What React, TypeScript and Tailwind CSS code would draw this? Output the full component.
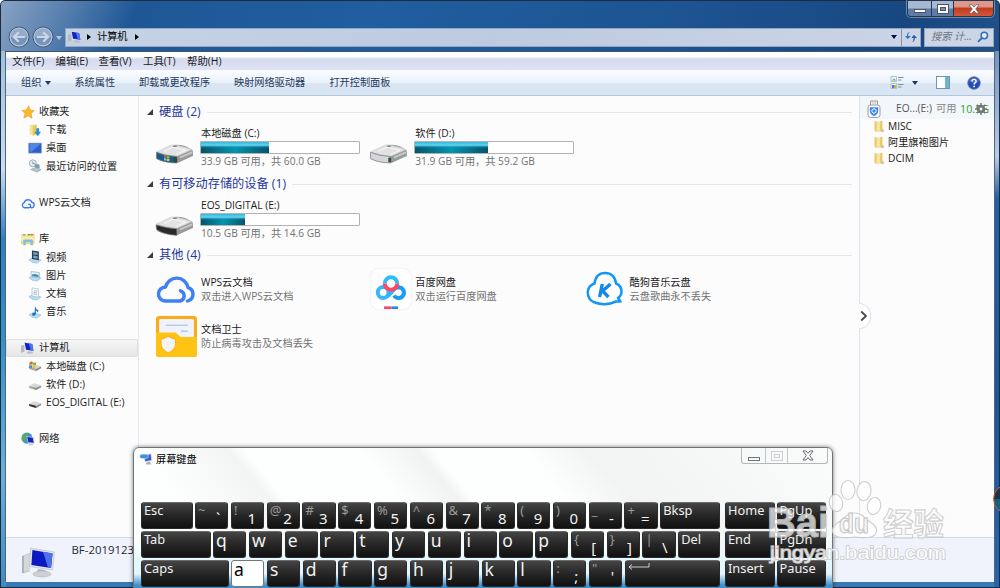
import { type ReactNode } from "react";
import { clsx } from "clsx";

type IconName =
  | "star" | "download" | "desktop" | "recent" | "cloud" | "library" | "video" | "picture"
  | "document" | "music" | "computer" | "driveC" | "driveD" | "driveE" | "network";

type NavItem = { label: string; icon: IconName; child?: boolean; selected?: boolean } | null;

const navItems: NavItem[] = [
  { label: "收藏夹", icon: "star" },
  { label: "下载", icon: "download", child: true },
  { label: "桌面", icon: "desktop", child: true },
  { label: "最近访问的位置", icon: "recent", child: true },
  null,
  { label: "WPS云文档", icon: "cloud" },
  null,
  { label: "库", icon: "library" },
  { label: "视频", icon: "video", child: true },
  { label: "图片", icon: "picture", child: true },
  { label: "文档", icon: "document", child: true },
  { label: "音乐", icon: "music", child: true },
  null,
  { label: "计算机", icon: "computer", selected: true },
  { label: "本地磁盘 (C:)", icon: "driveC", child: true },
  { label: "软件 (D:)", icon: "driveD", child: true },
  { label: "EOS_DIGITAL (E:)", icon: "driveE", child: true },
  null,
  { label: "网络", icon: "network" },
];

function Tray() {
  return <path d="M1 11 L6 8.5 L15 11.5 L10 15 Q4 14.5 1 11Z" fill="#b9dcf2" stroke="#7fb6dc" strokeWidth=".6" />;
}

function SmallDrive({ kind }: { kind: "C" | "D" | "E" }) {
  return (
    <>
      <path d="M1 9 L7 6 L15 8.5 L9 12 Z" fill="#d7d7d7" />
      <path d="M1 9 L9 11.2 V13.8 L1.5 11.4Z" fill={kind === "E" ? "#2c2c2c" : "#a5a5a5"} />
      <path d="M9 11.5 L15 8.5 V10.5 L9 14Z" fill="#8b8b8b" />
      {kind === "C" && (
        <>
          <path d="M2 3.5 Q4 2.4 5.6 3.4 L5 6.6 Q3.4 6 1.4 6.8Z" fill="#e2672b" />
          <path d="M6.2 3.6 Q8 4.4 9.6 3.6 L9 6.8 Q7.4 7.4 5.6 6.8Z" fill="#7db53c" />
          <path d="M1.3 7.4 Q3.4 6.6 4.9 7.4 L4.3 10.4 Q2.8 9.8 .8 10.4Z" fill="#3d8fd0" />
          <path d="M5.5 7.6 Q7.4 8.2 8.9 7.5 L8.3 10.5 Q6.6 11.2 4.9 10.4Z" fill="#eebd2c" />
        </>
      )}
      {kind === "D" && <circle cx="8" cy="12" r=".9" fill="#4aa53c" />}
    </>
  );
}

function ComputerShape() {
  return (
    <>
      <path d="M0 5.5 L4 4.2 V12.4 L0 13.4Z" fill="#b4bac1" />
      <path d="M3.5 1.2 L13.4 2.8 L15 12 L5.2 11Z" fill="#dfe3e8" />
      <path d="M4.2 2 L12.8 3.4 L14.2 11 L5.8 10.1Z" fill="#1320c8" />
      <path d="M9 2.8 L12.8 3.4 L14.2 11 L11 10.6Z" fill="#4f74ea" />
      <path d="M8 11.6 L12 12 L14.5 13.6 Q10 15.4 6 13.8Z" fill="#b9bfc6" />
    </>
  );
}

const shapes: Record<IconName, ReactNode> = {
  star: (
    <path d="M8.6 1 L10.6 5.6 L15 6.4 L11.6 9.8 L12.6 15 L8 12.4 L3.2 15 L4.6 9.8 L1 6.2 L6.2 5.6Z" fill="#fbb829" stroke="#e89b2a" strokeWidth=".7" />
  ),
  download: (
    <>
      <path d="M2 2 H7 V14 L2 13Z" fill="#f5e39b" />
      <path d="M5.4 3 L10 1.4 V13 L5.4 14.8Z" fill="#e8c75c" />
      <path d="M9.5 6 H12.7 V10 H15 L11.2 15 L7.2 10 H9.5Z" fill="#2c8fd0" />
    </>
  ),
  desktop: (
    <>
      <rect x=".8" y="2.4" width="14.6" height="11.4" fill="#2d5fc8" stroke="#8aa3cc" strokeWidth=".8" />
      <path d="M1.8 3.4 H14.4 L4 12.4 H1.8Z" fill="#5186e4" />
    </>
  ),
  recent: (
    <>
      <circle cx="5.5" cy="5" r="4" fill="#e3edf2" stroke="#98a8b2" />
      <path d="M5.5 3 V5.2 H7.5" stroke="#5c7484" strokeWidth=".8" fill="none" />
      <path d="M7.4 5.4 L13 6.4 L13.5 10.8 L8 10Z" fill="#7c9fb4" />
      <path d="M3 12 L8 10 L15 12 L10.5 15Z" fill="#b8c6ce" stroke="#7e94a0" strokeWidth=".6" />
    </>
  ),
  cloud: (
    <path d="M4.4 13.5 H3.8 A3.2 3.2 0 0 1 3.8 7.4 A4.6 4.6 0 0 1 12.4 7.2 A3.2 3.2 0 0 1 12.4 13.5 H11.8 M4.4 13.5 H9 A2 2 0 0 0 9 9.4" fill="none" stroke="#3c7cf0" strokeWidth="1.6" strokeLinecap="round" />
  ),
  library: (
    <>
      <path d="M0 3 H6 L7 2 H15.5 V14 H0Z" fill="#f0d986" />
      <path d="M2 3.2 H5 M8 3 H10.5" stroke="#5aa14a" strokeWidth="1.3" />
      <path d="M11 3 H14" stroke="#d96a4a" strokeWidth="1.3" />
      <path d="M0 5 H15.5 V10 H0Z" fill="#f8ebb0" />
      <path d="M2.6 15 V10 Q2.6 8.6 4.3 8.6 H12 Q13.6 8.6 13.6 10 V15 H10.8 V11.5 H5.4 V15Z" fill="#7cc0e4" />
    </>
  ),
  video: (
    <>
      <Tray />
      <path d="M4.5 .6 L12.4 1.8 V11.6 L4.5 10.4Z" fill="#2c3f50" />
      <path d="M6 2.3 L10.9 3 V5.8 L6 5.2Z M6 6.3 L10.9 7 V9.9 L6 9.2Z" fill="#6da8cf" />
    </>
  ),
  picture: (
    <>
      <Tray />
      <path d="M3.6 4 L13 5.2 V11.2 L3.6 10Z" fill="#e6f2f8" stroke="#7ca9c6" strokeWidth=".7" />
      <path d="M4.6 7.5 L8 6.8 L12 8 V10.2 L4.6 9.3Z" fill="#3f8fa8" />
    </>
  ),
  document: (
    <>
      <Tray />
      <path d="M4.6 1 L12 2.2 V11.6 L4.6 10.4Z" fill="#f5f8fb" stroke="#a2b5c4" strokeWidth=".7" />
      <path d="M7.5 4 L10.4 4.5 M6.2 6 L10.4 6.6 M6.2 8 L10.4 8.6" stroke="#8da4b8" strokeWidth=".8" />
    </>
  ),
  music: (
    <>
      <Tray />
      <path d="M8 1 Q8.5 4.5 12 6 Q11.4 8.4 10.6 8.4 Q10.6 6.5 9 6 V10 Q8.8 12.3 6.4 12.3 Q4 12 4.8 10 Q6 8.5 7.6 9Z" fill="#1670bd" />
    </>
  ),
  computer: <ComputerShape />,
  driveC: <SmallDrive kind="C" />,
  driveD: <SmallDrive kind="D" />,
  driveE: <SmallDrive kind="E" />,
  network: (
    <>
      <circle cx="6.8" cy="7" r="6.3" fill="#3f8fd4" />
      <path d="M1.6 4 Q5 0 8.5 1.6 Q8 5 5.5 5.5 Q4 8 5.5 11.5 Q2.4 11.4 1 8.5 Q.6 6 1.6 4Z" fill="#57ad55" />
      <path d="M6.6 5 L14 6.4 L15 12.8 L8 12Z" fill="#1727b9" stroke="#d5dbe4" strokeWidth=".8" />
      <path d="M9.5 13 L13 13.4 L14.5 15.2 H8.5Z" fill="#bfc6cd" />
    </>
  ),
};

function SmallIcon({ name, className }: { name: IconName; className?: string }) {
  return (
    <svg viewBox="0 0 16 16" className={clsx("size-[14px] shrink-0", className)}>
      {shapes[name]}
    </svg>
  );
}

function Triangle({ className, d = "M0 0 H6 L3 4Z" }: { className?: string; d?: string }) {
  return (
    <svg viewBox="0 0 6 6" className={clsx("size-[6px] shrink-0", className)}>
      <path d={d} fill="currentColor" />
    </svg>
  );
}

function RoundArrow({ flip }: { flip?: boolean }) {
  return (
    <svg viewBox="0 0 22 22" className={clsx("size-[22px] shrink-0", flip && "-scale-x-100")}>
      <circle cx="11" cy="11" r="10" fill="#7694bb" stroke="#41546f" strokeWidth="1" />
      <circle cx="11" cy="11" r="8.9" fill="none" stroke="#b9c9dd" strokeWidth="1.1" />
      <path d="M2.6 11 A8.4 8.4 0 0 1 19.4 11Z" fill="#9db2cd" opacity=".8" />
      <path d="M17 11 H6.5 M10.8 6.3 L6 11 L10.8 15.7" fill="none" stroke="#cbd7e6" strokeWidth="2.2" />
    </svg>
  );
}

function TitleBar() {
  return (
    <div className="flex h-7 shrink-0 justify-end pr-[6px]">
      <div className="flex h-[17px] overflow-hidden rounded-b-[4px] border border-[#26364f] shadow-[0_0_0_1px_rgba(255,255,255,0.35)]">
        <div className="flex w-6 items-end justify-center border-r border-[#26364f] bg-linear-to-b from-[#a7b9d1] from-45% to-[#5d7da6] to-55% pb-[3px]">
          <div className="h-[4px] w-[12px] border border-[#4c5566] bg-white" />
        </div>
        <div className="flex w-[22px] items-center justify-center border-r border-[#26364f] bg-linear-to-b from-[#a7b9d1] from-45% to-[#5d7da6] to-55%">
          <div className="flex h-[10px] w-[12px] items-center justify-center border border-[#4c5566] bg-white">
            <div className="h-[4px] w-[6px] border border-[#4c5566] bg-[#7890b2]" />
          </div>
        </div>
        <div className="flex w-[39px] items-center justify-center bg-linear-to-b from-[#dd9a8c] from-35% via-[#c33b20] via-50% to-[#d4573a]">
          <svg viewBox="0 0 12 10" className="h-[10px] w-[12px]">
            <path d="M1 .8 H4 L6 3.2 L8 .8 H11 L7.7 5 L11 9.2 H8 L6 6.8 L4 9.2 H1 L4.3 5Z" fill="#fff" stroke="#555a66" strokeWidth=".7" />
          </svg>
        </div>
      </div>
    </div>
  );
}

function AddressBar() {
  return (
    <div className="flex h-[18px] shrink-0 items-center pl-2">
      <div className="flex gap-[2px]">
        <RoundArrow />
        <RoundArrow flip />
      </div>
      <Triangle className="mx-[2px] mt-1 text-[#b8c8dc]" />
      <div className="ml-[1px] flex h-[19px] w-[856px] items-center border border-[#93a7c4] bg-linear-to-r from-[#c4d3e4] via-[#bccbe0] to-[#ccd4e6] text-black">
        <SmallIcon name="computer" className="ml-[2px]" />
        <Triangle className="ml-[4px]" d="M1 0 L5 3 L1 6Z" />
        <span className="ml-[5px] text-[10.2px]">计算机</span>
        <Triangle className="ml-[6px]" d="M1 0 L5 3 L1 6Z" />
        <Triangle className="mt-[2px] mr-[4px] ml-auto text-[#0a0a50]" />
        <div className="flex h-full w-[19px] items-center justify-center border-l border-[#8393ad]">
          <svg viewBox="0 0 12 12" className="size-[12px]">
            <path d="M5 1 Q3.2 1.5 3.2 4 V5 H5.6 L2.8 8.2 L0 5 H2 Q2 1 5 1Z" fill="#2779c4" />
            <path d="M7 11 Q8.5 10.5 8.5 8 V7 H6.3 L9 3.8 L12 7 H9.9 Q9.8 10.7 7 11Z" fill="#2b5f9e" />
          </svg>
        </div>
      </div>
      <div className="ml-[3px] flex h-[19px] w-[70px] items-center border border-[#93a7c4] bg-[#ccd5e4] pl-[6px]">
        <span className="w-[43px] text-[10.2px] whitespace-nowrap text-[#6c7683] italic">搜索 计...</span>
        <svg viewBox="0 0 12 12" className="ml-[3px] size-[12px]">
          <circle cx="7.3" cy="4.5" r="3.2" fill="#e4ecf6" stroke="#2c72bd" strokeWidth="1.5" />
          <path d="M4.8 7 L1 10.8" stroke="#2c72bd" strokeWidth="1.9" />
        </svg>
      </div>
    </div>
  );
}

function MenuBar() {
  return (
    <div className="flex h-[18px] shrink-0 items-center bg-linear-to-b from-white from-25% via-[#d5daee] via-40% to-[#dfe4f5] pt-[2px] pl-[6px] text-[10.4px] text-[#1b1b1b]">
      <span className="w-[43.5px]">文件(F)</span>
      <span className="w-[43px]">编辑(E)</span>
      <span className="w-[44.5px]">查看(V)</span>
      <span className="w-[44px]">工具(T)</span>
      <span>帮助(H)</span>
    </div>
  );
}

function Toolbar() {
  return (
    <div className="flex h-[26px] shrink-0 items-center border-b border-[#b3c5da] bg-linear-to-b from-[#fafcff] from-5% via-[#e9f1fb] via-50% to-[#dae5f3] to-55% pl-[15px] text-[10.2px] text-[#1e395b]">
      <span>组织</span>
      <Triangle className="mt-[2px] ml-[4px]" />
      <span className="ml-[23px] w-[64.5px]">系统属性</span>
      <span className="w-[95px]">卸载或更改程序</span>
      <span className="w-[95.5px]">映射网络驱动器</span>
      <span>打开控制面板</span>
      <svg viewBox="0 0 14 13" className="ml-auto h-[13px] w-[14px]">
        <path d="M1 .5 H6.5 V5.5 H1Z M1 7.5 H6.5 V12.5 H1Z" fill="#edf3f7" stroke="#9aabb8" strokeWidth=".7" />
        <path d="M2 4.5 L4 2.5 L6 4.5Z" fill="#4fae93" />
        <path d="M2 9 H4 V12 H2Z" fill="#4a7de0" />
        <path d="M4 9 H6 V12 H4Z" fill="#c4b334" />
        <path d="M8 1.5 H13.5 M8 4 H11.5 M8 8.5 H13.5 M8 11 H11.5" stroke="#7e8ea3" strokeWidth="1" />
      </svg>
      <Triangle className="mt-[2px] mr-[18px] ml-[8px]" />
      <div className="flex h-[13px] w-[14px] border border-[#6e96ae] bg-white">
        <div className="ml-auto w-[4px] bg-[#6fb4d2]" />
      </div>
      <svg viewBox="0 0 14 14" className="mr-[13px] ml-[17px] size-[14px]">
        <circle cx="7" cy="7" r="6.2" fill="#2249b8" stroke="#5b6f9c" strokeWidth=".9" />
        <path d="M2 5.5 A5.2 5.2 0 0 1 12 5.5 Q7 8 2 5.5Z" fill="#6286dc" opacity=".6" />
        <path d="M5 5.4 Q5 3.4 7 3.4 Q9.1 3.4 9.1 5.2 Q9.1 6.4 7.9 7 Q7.1 7.4 7.1 8.4" fill="none" stroke="#fff" strokeWidth="1.4" />
        <circle cx="7.1" cy="10.4" r=".9" fill="#fff" />
      </svg>
    </div>
  );
}

function Sidebar() {
  return (
    <div className="w-[133px] shrink-0 border-r border-[#e3ebf5] pt-[6.6px] text-[10.2px] text-[#1a1a1a]">
      {navItems.map((item, i) =>
        item ? (
          <div
            key={i}
            className={clsx(
              "flex h-[18.2px] items-center gap-[4px] whitespace-nowrap",
              item.child ? "pl-[22px]" : item.selected ? "pl-[14px]" : "pl-[15px]",
              item.selected && "rounded-[2px] border border-[#dedede] bg-linear-to-b from-[#f7f7f7] to-[#e6e6e6]",
            )}
          >
            <SmallIcon name={item.icon} />
            <span>{item.label}</span>
          </div>
        ) : (
          <div key={i} className="h-[18.2px]" />
        ),
      )}
    </div>
  );
}

function Group({ title, children, className }: { title: string; children: ReactNode; className?: string }) {
  return (
    <div className={className}>
      <div className="flex h-5 items-center">
        <Triangle className="text-[#3c3c3c]" d="M6 0 V6 H0Z" />
        <span className="ml-[6px] text-[12.2px] whitespace-nowrap text-[#24369a]">{title}</span>
        <div className="ml-[6px] h-px flex-1 bg-[#e4e6ea]" />
      </div>
      {children}
    </div>
  );
}

function BigDrive({ kind }: { kind: "C" | "D" | "E" }) {
  return (
    <svg viewBox="0 0 40 24" className="h-6 w-10">
      <path d="M2 11 L20 3 Q30 2 37 8 L38 14 L22 21 Q10 21 2 17Z" fill="#a9a9a9" />
      <path d="M1.5 10 L16 3.2 Q20 2 37 7.6 L22 14.4 Q10 13.5 1.5 10Z" fill="#e2e2e2" stroke="#c5c5c5" strokeWidth=".6" />
      <path d="M9 9.5 L18 5.3 L31 8.3 L21.5 12.2" fill="none" stroke="#f9f9f9" strokeWidth="1" />
      <ellipse cx="20" cy="4.2" rx="2" ry=".9" fill="#888" />
      <path d="M22 14.6 L37.6 8 L38 13.5 L22.2 21Z" fill="#999" />
      <path d="M25 14.5 L37 9.3 V11.4 L25 16.5Z" fill="#c8c8c8" />
      {kind === "D" && (
        <path d="M1.5 10.3 Q10 14 21.8 14.6 V21 Q8 20.5 1.5 16.5Z" fill="#d5d6dc" stroke="#8d8d92" strokeWidth=".9" />
      )}
      {kind === "C" && (
        <>
          <path d="M1.5 10.3 Q10 14 21.8 14.6 V21 Q8 20.5 1.5 16.5Z" fill="#1a5a86" stroke="#777" strokeWidth=".8" />
          <path d="M9 13 L11.5 13.7 V16 L9 15.5Z" fill="#e1682d" />
          <path d="M12 13.8 L14.5 14.3 V16.5 L12 16.1Z" fill="#87bf41" />
          <path d="M9 16 L11.5 16.5 V18.8 L9 18.2Z" fill="#6cc6f2" />
          <path d="M12 16.6 L14.5 17 V19.2 L12 18.9Z" fill="#f0c738" />
        </>
      )}
      {kind === "E" ? (
        <path d="M1 10.8 Q10 14 21.8 14.8 L22 21.4 Q8 20.5 1.5 15.5Z" fill="#2a2a2a" stroke="#888" strokeWidth=".7" />
      ) : (
        <rect x="19.6" y="15.8" width="2.2" height="4.3" rx=".6" fill="#226e28" stroke="#111" strokeWidth=".4" />
      )}
    </svg>
  );
}

function Drive({ kind, name, info, used }: { kind: "C" | "D" | "E"; name: string; info: string; used: number }) {
  return (
    <div className="flex w-[214.3px]">
      <div className="pt-[20px] pl-[8px]">
        <BigDrive kind={kind} />
      </div>
      <div className="ml-[5px] pt-[4px] text-[10.2px] whitespace-nowrap">
        <div className="h-[15px] pl-px leading-[15px] text-[#1a1a1a]">{name}</div>
        <div className="h-[13px] w-[160px] rounded-[1px] border border-[#b2b2b2] bg-white">
          <div
            className="h-full bg-[linear-gradient(to_bottom,#36b7de_0,#62d3ec_30%,rgba(30,150,190,0.35)_45%,transparent_60%),linear-gradient(to_right,#07536c,#0295b0_50%,#07536c)]"
            style={{ width: `${used}%` }}
          />
        </div>
        <div className="h-[14px] pl-px leading-[14px] text-[#737373]">{info}</div>
      </div>
    </div>
  );
}

function WpsCloud() {
  return (
    <svg viewBox="0 0 40 30" className="h-[30px] w-10">
      <path d="M10 27 H8.5 A7 7 0 0 1 8.5 13 A11.5 11.5 0 0 1 31 13.5 A7 7 0 0 1 32 26.5 L30.5 27 M10 27 H23 A5.3 5.3 0 0 0 23.5 16.8" fill="none" stroke="#3f80f4" strokeWidth="3.4" strokeLinecap="round" strokeLinejoin="round" />
    </svg>
  );
}

function BaiduDisk() {
  return (
    <div className="flex size-10 items-center justify-center rounded-[8px] bg-white shadow-[0_0_2px_rgba(0,0,0,0.12)]">
      <svg viewBox="0 0 40 40" className="size-10">
        <circle cx="12.2" cy="23.5" r="5.4" fill="none" stroke="#36b9f6" strokeWidth="4" />
        <path d="M22 21 Q25 18.2 28 18.2 A5.4 5.4 0 1 1 23 26.5" fill="none" stroke="#189df8" strokeWidth="4" />
        <path d="M16 27.5 Q19 25.5 24 19" fill="none" stroke="#2fb4f7" strokeWidth="4" />
        <path d="M13.7 14.5 A6.3 6.3 0 0 1 26.3 14.5" fill="none" stroke="#2ebcf8" strokeWidth="4" />
        <path d="M13.7 14.5 A6.3 6.3 0 0 0 26.3 14.5" fill="none" stroke="#ff4668" strokeWidth="4" />
        <path d="M13 38.7 H20.5" stroke="#f8446e" strokeWidth="2.6" />
        <path d="M20.5 38.7 H27" stroke="#2287f2" strokeWidth="2.6" />
      </svg>
    </div>
  );
}

function KugouCloud() {
  return (
    <svg viewBox="0 0 40 36" className="h-9 w-10">
      <path d="M9.5 12.5 Q11 2 20 2 Q29.5 2 31 12.5 Q36.5 14.5 36.5 21 Q36.5 24.5 33 27 L35.5 30.5 H31 Q20 35.5 8.5 31 Q2.5 28 2.8 20.5 Q3.5 14.5 9.5 12.5Z" fill="#fff" stroke="#1296f8" strokeWidth="2.5" strokeLinejoin="round" />
      <path d="M17.3 13 L14.6 26 M25.5 13 L17.5 20 L23.5 26" fill="none" stroke="#1489e8" strokeWidth="3.4" />
    </svg>
  );
}

function DocGuard() {
  return (
    <svg viewBox="0 0 40 40" className="size-[41px] shrink-0">
      <rect width="40" height="40" rx="3" fill="#ffaa14" />
      <rect x="3" y="3" width="34" height="22" rx="1" fill="#eff3fb" />
      <path d="M9.5 9 H31 M24.5 14.8 H31" stroke="#bccbe8" strokeWidth="1.6" />
      <path d="M0 16 H19 L24 20.5 H40 V37 Q40 40 37 40 H3 Q0 40 0 37Z" fill="#ffc314" />
      <path d="M12 19.5 Q15.5 22 19 22.5 V28 Q18.5 33 12 36 Q5.5 33 5 28 V22.5 Q8.5 22 12 19.5Z" fill="#f4f4f6" stroke="#ffaf18" strokeWidth="1" />
    </svg>
  );
}

function Place({ icon, name, info }: { icon: ReactNode; name: string; info: string }) {
  return (
    <div className="flex h-[47.6px] w-[214.3px] items-center pl-[9.5px]">
      <div className="flex w-10 justify-center">{icon}</div>
      <div className="ml-[4.5px] text-[10.2px] leading-[14px] whitespace-nowrap">
        <div className="text-[#1a1a1a]">{name}</div>
        <div className="text-[#737373]">{info}</div>
      </div>
    </div>
  );
}

function Content() {
  return (
    <div className="w-[720px] shrink-0 pt-[6px] pr-[7px] pl-[8px]">
      <Group title="硬盘 (2)" className="h-[72px]">
        <div className="flex">
          <Drive kind="C" name="本地磁盘 (C:)" info="33.9 GB 可用，共 60.0 GB" used={43} />
          <Drive kind="D" name="软件 (D:)" info="31.9 GB 可用，共 59.2 GB" used={46} />
        </div>
      </Group>
      <Group title="有可移动存储的设备 (1)" className="h-[71px]">
        <Drive kind="E" name="EOS_DIGITAL (E:)" info="10.5 GB 可用，共 14.6 GB" used={28} />
      </Group>
      <Group title="其他 (4)">
        <div className="flex flex-wrap">
          <Place icon={<WpsCloud />} name="WPS云文档" info="双击进入WPS云文档" />
          <Place icon={<BaiduDisk />} name="百度网盘" info="双击运行百度网盘" />
          <Place icon={<KugouCloud />} name="酷狗音乐云盘" info="云盘歌曲永不丢失" />
          <Place icon={<DocGuard />} name="文档卫士" info="防止病毒攻击及文档丢失" />
        </div>
      </Group>
    </div>
  );
}

function FolderIcon() {
  return (
    <svg viewBox="0 0 12 14" className="h-[13px] w-[11px] shrink-0">
      <path d="M.5 1 L5 2 V13.4 L.5 12Z" fill="#e8cc6c" />
      <path d="M3 2.4 L9 .8 V11.8 L3 13.6Z" fill="#f7e49d" />
      <path d="M7 1.6 L9 .8 V11.8 L7 12.4Z" fill="#e3c45c" />
      <path d="M9 9 L11.5 12.5 L8 13.2Z" fill="#c9c2ae" />
    </svg>
  );
}

function UsbPanel() {
  return (
    <div className="relative flex-1 border-l border-[#d9e4f0] text-[10.2px]">
      <div className="flex h-[22.5px] items-center bg-[#f3f6fb] pt-[3px] pl-[7px] whitespace-nowrap">
        <svg viewBox="0 0 14 18" className="h-[18px] w-[14px] shrink-0">
          <path d="M3.5 5 V1 H10.5 V5" fill="#f5f5f5" stroke="#9b9b9b" />
          <path d="M5.5 3 H6.5 M7.8 3 H8.8" stroke="#888" strokeWidth="1.2" />
          <rect x="1" y="5" width="12" height="12.4" rx="2.5" fill="#fff" stroke="#999" />
          <path d="M2.8 7.2 H11.2 V11 Q11 14.5 7 16 Q3 14.5 2.8 11Z" fill="#3c84f2" />
          <circle cx="7" cy="11" r="2.2" fill="none" stroke="#fff" />
        </svg>
        <span className="ml-[15px] w-[40px] text-[#565656]">EO...(E:)</span>
        <span className="w-[24px] text-[#858585]">可用</span>
        <span className="w-[15px] text-[10.8px] text-[#2aa12a]">10.5G</span>
        <svg viewBox="0 0 12 12" className="size-3 shrink-0">
          <circle cx="6" cy="6" r="3.2" fill="none" stroke="#777" strokeWidth="2.2" />
          <path d="M6 0 V12 M0 6 H12 M1.8 1.8 L10.2 10.2 M10.2 1.8 L1.8 10.2" stroke="#777" strokeWidth="1.5" />
          <circle cx="6" cy="6" r="1.4" fill="#f3f6fb" />
        </svg>
      </div>
      <div className="pl-[14px] text-[#1a1a1a]">
        {["MISC", "阿里旗袍图片", "DCIM"].map((name) => (
          <div key={name} className="flex h-[16.2px] items-center gap-[3px]">
            <FolderIcon />
            <span>{name}</span>
          </div>
        ))}
      </div>
      <div className="absolute top-[207px] -left-px flex h-[26px] w-[12px] items-center rounded-r-full border border-l-0 border-[#dbe4ee] bg-white">
        <svg viewBox="0 0 8 12" className="ml-px h-[12px] w-[8px]">
          <path d="M1.2 1.5 L6 6 L1.2 10.5" fill="none" stroke="#4a4a4a" strokeWidth="1.8" />
        </svg>
      </div>
    </div>
  );
}

function DetailsPane() {
  return (
    <div className="flex h-[45px] shrink-0 border-t border-[#d3ddeb] bg-[#f0f3fb]">
      <svg viewBox="0 0 38 32" className="mt-[9px] ml-[14px] h-8 w-[38px]">
        <path d="M2 9 L10 6 V24 L2 26.5Z" fill="#aeb3b8" />
        <path d="M4 8.6 L10 6.5 V23.5 L4 25Z" fill="#d5d8db" />
        <path d="M10.5 1 L34.5 5 L32.5 23 L9.5 19.5Z" fill="#e2e5ea" stroke="#b6bbc2" strokeWidth=".6" />
        <path d="M12.4 3 L32.5 6.4 L31 21 L11.4 18Z" fill="#0c19c2" />
        <path d="M23 4.8 L32.5 6.4 L31 21 L28 20.5Z" fill="#4d70e8" />
        <path d="M18 22 L25 23 L27 26 H17Z" fill="#b3b8be" />
        <ellipse cx="22" cy="27" rx="9" ry="3" fill="#cdd1d5" stroke="#a8adb3" strokeWidth=".5" />
      </svg>
      <span className="mt-[3px] ml-[13.5px] text-[11.4px] text-[#1e2b3c]">BF-2019123</span>
    </div>
  );
}

type KeyDef = { main: string; shift?: string; letter?: boolean; pressed?: boolean; width?: string };

const letters = (s: string): KeyDef[] => s.split("").map((c) => ({ main: c, letter: true, pressed: c === "a" }));

const symbols = (s: string): KeyDef[] => s.split(" ").map((p) => ({ shift: p[0], main: p[1] }));

const rows: { main: KeyDef[]; side: string[] }[] = [
  {
    main: [{ main: "Esc", width: "w-[51.5px]" }, ...symbols("~` !1 @2 #3 $4 %5 ^6 &7 *8 (9 )0 _- +="), { main: "Bksp", width: "flex-1" }],
    side: ["Home", "PgUp"],
  },
  {
    main: [{ main: "Tab", width: "w-[69.5px]" }, ...letters("qwertyuiop"), ...symbols("{[ }] |\\"), { main: "Del", width: "flex-1" }],
    side: ["End", "PgDn"],
  },
  {
    main: [{ main: "Caps", width: "w-[87.5px]" }, ...letters("asdfghjkl"), ...symbols(":; \"'"), { main: "Enter", width: "flex-1" }],
    side: ["Insert", "Pause"],
  },
];

function Key({ def }: { def: KeyDef }) {
  return (
    <div
      className={clsx(
        "h-[27px] rounded-[3px] border px-[2px] font-['Noto_Sans','Noto_Sans_CJK_SC',sans-serif] whitespace-nowrap",
        def.width ?? "w-[33.2px]",
        def.pressed
          ? "border-[#777] bg-white text-black"
          : "border-[#2b2b2b] border-t-[#6b6b6b] bg-linear-to-b from-[#454545] via-[#262626] via-50% to-[#111] text-[#f2f2f2]",
      )}
    >
      {def.main === "Enter" ? (
        <svg viewBox="0 0 22 7" className="mt-[2px] h-[7px] w-[22px]">
          <path d="M21 0 V4 H1 M4 1.5 L1 4 L4 6.5" fill="none" stroke="#ddd" strokeWidth=".9" />
        </svg>
      ) : def.shift ? (
        <div className="flex justify-between">
          <span className="text-[13px] leading-[14px] text-[#9a9a9a]">{def.shift}</span>
          <span className="pt-[8px] pr-[5px] text-[15px] leading-[15px]">{def.main}</span>
        </div>
      ) : def.letter ? (
        <div className="text-[17.5px] leading-[16px]">{def.main}</div>
      ) : (
        <div className="text-[12.8px] leading-[15px]">{def.main}</div>
      )}
    </div>
  );
}

function OnScreenKeyboard() {
  return (
    <div className="absolute top-[447px] left-[133px] h-[145px] w-[700px] rounded-t-[6px] border border-[#6f7479] bg-[linear-gradient(to_bottom,transparent_65%,#e6f8fc_78%,#e2f5fc_88%,#3f8fcc_96%),linear-gradient(50deg,#fdfefe_15%,#f3f4f4_26%,#fdfefe_28%,#fdfefe_42%,#f1f2f2_49%,#fdfefe_51%,#fdfefe_62%,#f2f3f3_70%,#fafbfb_100%)] shadow-[0_0_4px_rgba(0,0,0,0.5)]">
      <div className="flex h-[54px] items-start">
        <svg viewBox="0 0 16 16" className="mt-[4px] ml-[5px] size-[14px]">
          <path d="M4 4 L14 1.4 L15 10 L7 11.6Z" fill="#c9d1de" />
          <path d="M6 4.8 L13.2 2.6 L14 9.2 L7.4 10.6Z" fill="#3d58d4" />
          <path d="M8 12 L12.6 11.2 L14 14.2 H8.4Z" fill="#a9afb8" />
          <rect x="1" y="2.5" width="9.5" height="5" rx="2" fill="#3f8fe0" stroke="#e6eef8" strokeWidth=".6" />
        </svg>
        <span className="mt-[4px] ml-[3px] text-[10.2px] leading-[15px] text-black">屏幕键盘</span>
        <div className="mr-[4px] ml-auto flex h-4 w-[87px] rounded-b-[3px] border border-t-0 border-[#b4b8bb]">
          <div className="flex w-[24px] items-end justify-center border-r border-[#c3c6c9] pb-[2px]">
            <div className="h-[4px] w-[12px] border border-[#70767d]" />
          </div>
          <div className="flex w-[22px] items-center justify-center border-r border-[#c3c6c9]">
            <div className="flex h-[10px] w-[12px] items-center justify-center border border-[#cdd0d3]">
              <div className="h-[4px] w-[6px] border border-[#cdd0d3]" />
            </div>
          </div>
          <div className="flex flex-1 items-center justify-center">
            <svg viewBox="0 0 12 11" className="h-[11px] w-[12px]">
              <path d="M1 1 H4 L6 3.4 L8 1 H11 L7.7 5.5 L11 10 H8 L6 7.4 L4 10 H1 L4.3 5.5Z" fill="#fff" stroke="#656b73" strokeWidth="1" />
            </svg>
          </div>
        </div>
      </div>
      <div className="flex flex-col gap-[2px] pl-[7px]">
        {rows.map((row, i) => (
          <div key={i} className="flex">
            <div className="flex w-[579px] gap-[2.6px]">
              {row.main.map((def, j) => (
                <Key key={j} def={def} />
              ))}
            </div>
            <div className="ml-[5px] flex gap-[2px]">
              {row.side.map((name) => (
                <Key key={name} def={{ main: name, width: "w-[49.5px]" }} />
              ))}
            </div>
          </div>
        ))}
      </div>
    </div>
  );
}

function Watermark() {
  return (
    <div className="absolute top-[478px] left-[766px] h-[92px] w-[184px] font-['Liberation_Sans','Noto_Sans_CJK_SC',sans-serif] opacity-85">
      <svg viewBox="0 0 184 92" className="h-full w-full">
        <g fill="#fff" fillOpacity=".85" stroke="#c8c8c8" strokeWidth="1.1">
          <ellipse cx="70" cy="25" rx="6.6" ry="8.6" transform="rotate(-12 70 25)" />
          <ellipse cx="82" cy="12" rx="7" ry="9.5" />
          <ellipse cx="98" cy="13" rx="7" ry="9.5" transform="rotate(8 98 13)" />
          <ellipse cx="108" cy="28" rx="6.6" ry="8.6" transform="rotate(14 108 28)" />
          <path d="M88 35 Q94 35 98 39 Q102 43 107 46 Q113 52 109 57 Q104 61 89 59 Q73 61 68 57 Q64 52 70 46 Q75 43 79 39 Q83 35 88 35Z" />
          <text x="1" y="59" fontSize="43" fontWeight="bold" textLength="62" lengthAdjust="spacingAndGlyphs">Bai</text>
          <text x="73" y="55" fontSize="27" fontWeight="bold" fill="#f4f4f4" stroke="#bbb" textLength="30" lengthAdjust="spacingAndGlyphs">du</text>
          <text x="117" y="57" fontSize="31" fontWeight="bold" textLength="61" lengthAdjust="spacingAndGlyphs">经验</text>
        </g>
        <text x="4" y="81" fontSize="19" fill="#fff" stroke="#c4c4c4" strokeWidth="1.6" paintOrder="stroke" textLength="176" lengthAdjust="spacingAndGlyphs">
          jingyan.baidu.com
        </text>
      </svg>
    </div>
  );
}

export default function App() {
  return (
    <div className="relative flex h-[588px] w-[1000px] flex-col overflow-hidden rounded-t-[5px] font-['Open_Sans','Noto_Sans_CJK_SC',sans-serif] shadow-[inset_0_0_0_1px_#1b2b40] [background:linear-gradient(to_bottom,#9fc0dd_0,#c9def0_20%,#2f80bd_32%,#3592c8_50%,#6bb0da_72%,#2f78b4_100%)_left_51px/6px_100%_no-repeat,linear-gradient(to_bottom,#6f94bf_0,#b9cde4_18%,#2461a3_25%,#1c5796_60%,#2a69b0_100%)_right_51px/6px_100%_no-repeat,linear-gradient(to_bottom,transparent_580px,#3579b8_581px),linear-gradient(115deg,#8aa3c3_0,#5b82b1_5%,#1f5796_11%,#205e9f_30%,#1d5391_55%,#184780_72%,#2a5b93_88%,#7f9cc0_96%)]">
      <TitleBar />
      <AddressBar />
      <div className="mx-[5px] mt-[5px] flex h-[531px] shrink-0 flex-col border border-[#4c647f] border-t-[#3d5573] bg-[#fcfcfd]">
        <MenuBar />
        <Toolbar />
        <div className="flex h-[441px] shrink-0">
          <Sidebar />
          <Content />
          <UsbPanel />
        </div>
        <DetailsPane />
      </div>
      <OnScreenKeyboard />
      <div className="absolute top-[484px] left-[993px] size-[30px] rounded-full border border-[#d1582c] bg-[linear-gradient(to_bottom,#1d3346_50%,#14627c_50%)]" />
      <Watermark />
    </div>
  );
}
